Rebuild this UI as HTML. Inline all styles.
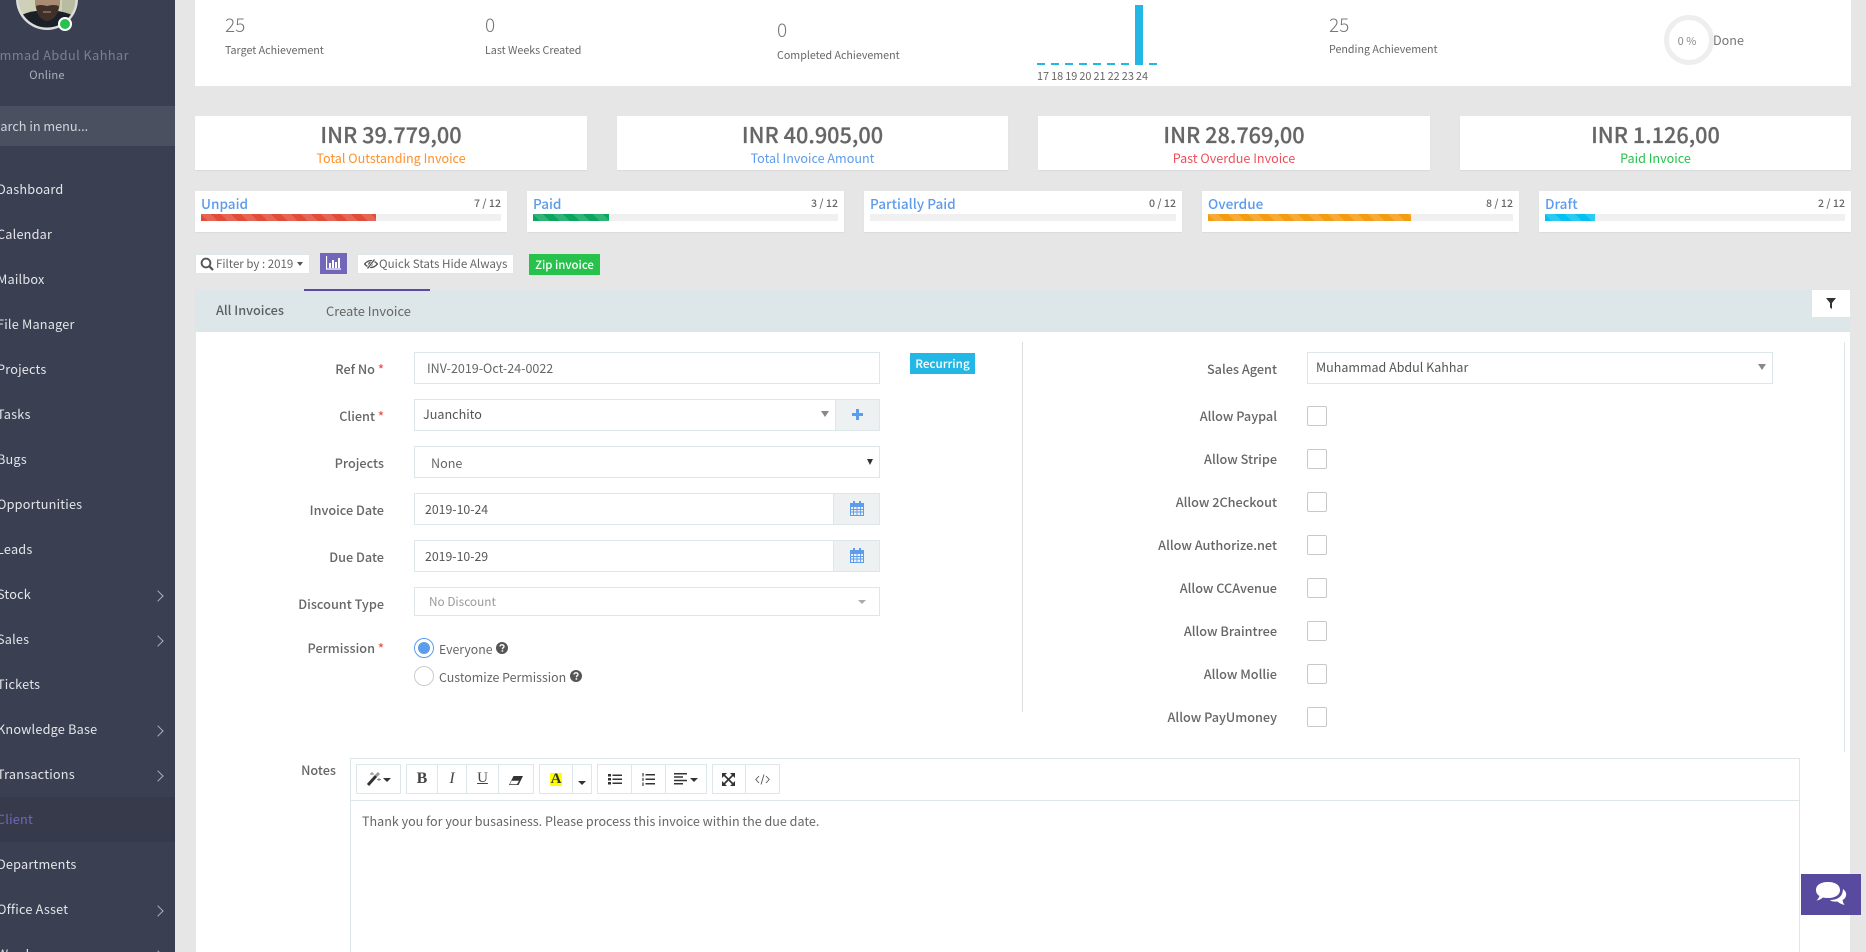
<!DOCTYPE html>
<html><head><meta charset="utf-8"><title>Invoice</title>
<style>
html,body{margin:0;padding:0;width:1866px;height:952px;overflow:hidden;background:#e6e6e6}
body{position:relative;font-family:"Noto Sans CJK JP","Liberation Sans",sans-serif;color:#666;font-size:12.6px}
div,span.a,svg.a{position:absolute}
.t{position:absolute;white-space:nowrap;line-height:20px;height:20px}
.r{text-align:right}
.c{text-align:center}
.w{background:#fff}
.card{background:#fff;box-shadow:0 1px 1px rgba(0,0,0,.05)}
.amt{font-size:21.7px;font-weight:500;color:#666;line-height:30px;height:30px;top:120px;text-align:center;white-space:nowrap;-webkit-text-stroke:.2px #666}
.lbl{font-size:12.6px;line-height:20px;height:20px;top:148px;text-align:center;white-space:nowrap}
.s18{font-size:19px;font-weight:300;color:#777}
.s12{font-size:10.7px;color:#666}
.m{left:-3px;color:#e4e6ea;font-size:12.7px;letter-spacing:.2px}
.chev{left:154px;width:7px;height:7px;border-top:1px solid #aeb2bd;border-right:1px solid #aeb2bd;transform:rotate(45deg)}
.pt{top:193px;font-size:13.6px;color:#5d9cec;font-weight:500}
.pn{top:194px;font-size:10.6px;color:#666;font-weight:500}
.tr{top:214px;height:7px;background:#f0f0f0}
.fl{top:214px;height:7px;background-image:linear-gradient(45deg,rgba(255,255,255,.15) 25%,transparent 25%,transparent 50%,rgba(255,255,255,.15) 50%,rgba(255,255,255,.15) 75%,transparent 75%,transparent);background-size:20px 20px}
.btn{background:#fff;border:1px solid #dde6e9;box-sizing:border-box;top:254px;height:20px}
.fl2{color:#666;font-size:11.5px;font-weight:400}
.ip{box-sizing:border-box;border:1px solid #dde6e9;background:#fff}
.ad{box-sizing:border-box;border:1px solid #dde6e9;background:#edf1f2}
.ck{box-sizing:border-box;border:1px solid #c8c8c8;border-radius:2px;left:1307px;width:20px;height:20px;background:#fff}
.req{color:#f05050}
.tb{box-sizing:border-box;border:1px solid #dde6e9;top:764px;height:30px;background:#fff}
.ar{width:0;height:0;border-left:4px solid transparent;border-right:4px solid transparent;border-top:6px solid #888}
.fm{font-weight:500;color:#666;font-size:12.7px}
</style></head>
<body>
<!-- sidebar -->
<div style="left:0;top:0;width:175px;height:952px;background:#3a3f51;overflow:hidden">
  <svg class="a" style="left:16px;top:-32px" width="62" height="62" viewBox="0 0 62 62">
    <defs><clipPath id="av"><circle cx="31" cy="31" r="28.500"/></clipPath></defs>
    <circle cx="31" cy="31" r="31" fill="#dcdcdc"/>
    <g clip-path="url(#av)">
      <rect width="62" height="62" fill="#cfd0b8"/>
      <rect x="46" width="16" height="62" fill="#b9bca0"/>
      <path d="M0 62V50Q10 44 20 43L42 43Q54 45 62 50V62Z" fill="#1b1f27"/>
      <path d="M19 20H44V36Q42 50 31 52Q21 50 19 36Z" fill="#a98a73"/>
      <path d="M20 38Q24 36 31 38Q38 36 43 38Q42 51 31 53Q21 51 20 38Z" fill="#3f312a"/>
      <path d="M27 43h8v2h-8z" fill="#7c6252"/>
    </g>
  </svg>
  <div style="left:58px;top:17px;width:10px;height:10px;border-radius:50%;background:#27c24c;border:2px solid #fff"></div>
  <div class="t c" style="left:-53px;top:45px;width:200px;color:#7b8190;font-size:12.7px;letter-spacing:.45px">Muhammad Abdul Kahhar</div>
  <div class="t c" style="left:17px;top:65px;width:60px;color:#aab0bc;font-size:11.200px;letter-spacing:.2px">Online</div>
  <div style="left:0;top:106px;width:175px;height:40px;background:#4b5060"></div>
  <div class="t" style="left:-14px;top:116px;color:#d2d5dc;font-size:12.7px">Search in menu...</div>
  <div style="left:0;top:797px;width:175px;height:45px;background:#363a4a"></div>
  <div class="t m" style="top:179px">Dashboard</div>
  <div class="t m" style="top:224px">Calendar</div>
  <div class="t m" style="top:269px">Mailbox</div>
  <div class="t m" style="top:314px">File Manager</div>
  <div class="t m" style="top:359px">Projects</div>
  <div class="t m" style="top:404px">Tasks</div>
  <div class="t m" style="top:449px">Bugs</div>
  <div class="t m" style="top:494px">Opportunities</div>
  <div class="t m" style="top:539px">Leads</div>
  <div class="t m" style="top:584px">Stock</div><div class="chev" style="top:592px"></div>
  <div class="t m" style="top:629px">Sales</div><div class="chev" style="top:637px"></div>
  <div class="t m" style="top:674px">Tickets</div>
  <div class="t m" style="top:719px">Knowledge Base</div><div class="chev" style="top:727px"></div>
  <div class="t m" style="top:764px">Transactions</div><div class="chev" style="top:772px"></div>
  <div class="t m" style="top:809px;color:#7266ba">Client</div>
  <div class="t m" style="top:854px">Departments</div>
  <div class="t m" style="top:899px">Office Asset</div><div class="chev" style="top:907px"></div>
  <div class="t m" style="top:944px">Word</div><div class="chev" style="top:952px"></div>
</div>

<!-- top card -->
<div class="w" style="left:195px;top:0;width:1656px;height:86px"></div>
<div class="t s18" style="left:225px;top:15px">25</div>
<div class="t s12" style="left:225px;top:41px">Target Achievement</div>
<div class="t s18" style="left:485px;top:15px">0</div>
<div class="t s12" style="left:485px;top:41px">Last Weeks Created</div>
<div class="t s18" style="left:777px;top:20px">0</div>
<div class="t s12" style="left:777px;top:46px">Completed Achievement</div>
<div style="left:1037px;top:63px;width:120px;height:2px;background:repeating-linear-gradient(90deg,#23b7e5 0,#23b7e5 8px,transparent 8px,transparent 14px)"></div>
<div style="left:1135px;top:5px;width:8px;height:60px;background:#23b7e5"></div>
<div class="t s12" style="left:1037px;top:66px;font-size:10.900px;word-spacing:-.4px">17 18 19 20 21 22 23 24</div>
<div class="t s18" style="left:1329px;top:15px">25</div>
<div class="t s12" style="left:1329px;top:40px">Pending Achievement</div>
<div style="left:1664px;top:15px;width:50px;height:50px;box-sizing:border-box;border:5px solid #eee;border-radius:50%"></div>
<div class="t c" style="left:1667px;top:31px;width:40px;font-size:11px;color:#888">0 %</div>
<div class="t" style="left:1713px;top:30px;color:#777;font-size:12.6px">Done</div>

<!-- summary cards -->
<div class="card" style="left:195px;top:116px;width:392px;height:54px"></div>
<div class="card" style="left:617px;top:116px;width:391px;height:54px"></div>
<div class="card" style="left:1038px;top:116px;width:392px;height:54px"></div>
<div class="card" style="left:1460px;top:116px;width:391px;height:54px"></div>
<div class="amt" style="left:195px;width:392px">INR 39.779,00</div>
<div class="lbl" style="left:195px;width:392px;color:#ff902b">Total Outstanding Invoice</div>
<div class="amt" style="left:617px;width:391px">INR 40.905,00</div>
<div class="lbl" style="left:617px;width:391px;color:#5d9cec">Total Invoice Amount</div>
<div class="amt" style="left:1038px;width:392px">INR 28.769,00</div>
<div class="lbl" style="left:1038px;width:392px;color:#f0505a">Past Overdue Invoice</div>
<div class="amt" style="left:1460px;width:391px">INR 1.126,00</div>
<div class="lbl" style="left:1460px;width:391px;color:#27c24c">Paid Invoice</div>

<!-- progress cards -->
<div class="card" style="left:195px;top:191px;width:312px;height:41px"></div>
<div class="card" style="left:527px;top:191px;width:317px;height:41px"></div>
<div class="card" style="left:864px;top:191px;width:318px;height:41px"></div>
<div class="card" style="left:1202px;top:191px;width:317px;height:41px"></div>
<div class="card" style="left:1539px;top:191px;width:312px;height:41px"></div>
<div class="t pt" style="left:201px">Unpaid</div><div class="t pn r" style="left:401px;width:100px">7 / 12</div>
<div class="tr" style="left:201px;width:300px"></div><div class="fl" style="left:201px;width:175px;background-color:#e24b37"></div>
<div class="t pt" style="left:533px">Paid</div><div class="t pn r" style="left:738px;width:100px">3 / 12</div>
<div class="tr" style="left:533px;width:305px"></div><div class="fl" style="left:533px;width:76px;background-color:#0aa65f"></div>
<div class="t pt" style="left:870px">Partially Paid</div><div class="t pn r" style="left:1076px;width:100px">0 / 12</div>
<div class="tr" style="left:870px;width:306px"></div>
<div class="t pt" style="left:1208px">Overdue</div><div class="t pn r" style="left:1413px;width:100px">8 / 12</div>
<div class="tr" style="left:1208px;width:305px"></div><div class="fl" style="left:1208px;width:203px;background-color:#f39c12"></div>
<div class="t pt" style="left:1545px">Draft</div><div class="t pn r" style="left:1745px;width:100px">2 / 12</div>
<div class="tr" style="left:1545px;width:300px"></div><div class="fl" style="left:1545px;width:50px;background-color:#05c1f0"></div>

<!-- toolbar -->
<div class="btn" style="left:195px;width:115px"></div>
<svg class="a" style="left:200px;top:257px" width="14" height="14" viewBox="0 0 14 14"><circle cx="6" cy="6" r="4.400" fill="none" stroke="#555" stroke-width="1.900"/><path d="M9.200 9.200L13 13" stroke="#555" stroke-width="2.200"/></svg>
<div class="t fl2" style="left:216px;top:254px">Filter by : 2019</div>
<div class="a" style="left:297px;top:262px;width:0;height:0;border-left:3.500px solid transparent;border-right:3.500px solid transparent;border-top:4px solid #555"></div>
<div style="left:320px;top:253px;width:27px;height:21px;background:#7266ba"></div>
<svg class="a" style="left:326px;top:256px" width="15" height="14" viewBox="0 0 15 14"><path d="M.5 0V13H15" fill="none" stroke="#fff" stroke-width="1.200"/><path d="M3 7h2v5H3zM6 4h2v8H6zM9 6h2v6H9zM12 2h2v10h-2z" fill="#fff"/></svg>
<div class="btn" style="left:357px;width:157px"></div>
<svg class="a" style="left:364px;top:258px" width="14" height="12" viewBox="0 0 14 12"><path d="M.5 6Q7-1 13.500 6Q7 13 .5 6Z" fill="none" stroke="#555" stroke-width="1.300"/><circle cx="6.500" cy="6" r="2.300" fill="#555"/><path d="M3.500 10.500L10.500 1.500" stroke="#fff" stroke-width="2.600"/><path d="M3.500 10.500L10.500 1.500" stroke="#555" stroke-width="1.300"/></svg>
<div class="t fl2" style="left:379px;top:254px;font-size:11.600px">Quick Stats Hide Always</div>
<div style="left:529px;top:254px;width:71px;height:21px;background:#27c24c"></div>
<div class="t" style="left:529px;top:255px;width:71px;text-align:center;color:#fff;font-size:11.400px;font-weight:500">Zip invoice</div>

<!-- tabs -->
<div style="left:195px;top:289px;width:1655px;height:43px;background:#dde6e9"></div>
<div style="left:304px;top:289px;width:126px;height:2px;background:#564aa3"></div>
<div class="t" style="left:216px;top:300px;font-weight:500;color:#5a5f63;font-size:12.700px">All Invoices</div>
<div class="t" style="left:326px;top:301px;color:#666;font-size:12.900px">Create Invoice</div>
<div class="w" style="left:1812px;top:290px;width:38px;height:27px"></div>
<svg class="a" style="left:1826px;top:298px" width="10" height="11" viewBox="0 0 10 11"><path d="M0 0H10L6 5V11L4 9.500V5Z" fill="#333"/></svg>

<!-- form panel -->
<div class="w" style="left:196px;top:332px;width:1654px;height:620px"></div>
<div style="left:1022px;top:342px;width:1px;height:370px;background:#ddd"></div>
<div style="left:1844px;top:342px;width:1px;height:410px;background:#dde6e9"></div>

<div class="t r fm" style="left:234px;top:359px;width:150px">Ref No <span class="req">*</span></div>
<div class="ip" style="left:414px;top:352px;width:466px;height:32px"></div>
<div class="t" style="left:427px;top:358px;font-size:12.500px;color:#666">INV-2019-Oct-24-0022</div>
<div style="left:910px;top:353px;width:65px;height:21px;background:#23b7e5"></div>
<div class="t c" style="left:910px;top:354px;width:65px;color:#fff;font-size:11.700px;font-weight:500">Recurring</div>

<div class="t r fm" style="left:234px;top:406px;width:150px">Client <span class="req">*</span></div>
<div class="ip" style="left:414px;top:399px;width:466px;height:32px"></div>
<div class="ad" style="left:835px;top:399px;width:45px;height:32px"></div>
<div class="t" style="left:423px;top:404px;font-size:12.600px;color:#555">Juanchito</div>
<div class="a ar" style="left:821px;top:411px"></div>
<div style="left:852px;top:413px;width:11px;height:3px;background:#5d9cec"></div>
<div style="left:856px;top:409px;width:3px;height:11px;background:#5d9cec"></div>

<div class="t r fm" style="left:234px;top:453px;width:150px">Projects</div>
<div class="ip" style="left:414px;top:446px;width:466px;height:32px"></div>
<div class="t" style="left:431px;top:453px;font-size:12.600px;color:#666">None</div>
<div class="a" style="left:867px;top:459px;width:0;height:0;border-left:3px solid transparent;border-right:3px solid transparent;border-top:6px solid #333"></div>

<div class="t r fm" style="left:234px;top:500px;width:150px">Invoice Date</div>
<div class="ip" style="left:414px;top:493px;width:466px;height:32px"></div>
<div class="ad" style="left:833px;top:493px;width:47px;height:32px"></div>
<div class="t" style="left:425px;top:499px;font-size:12.300px;color:#555">2019-10-24</div>
<svg class="a" style="left:850px;top:501px" width="14" height="15" viewBox="0 0 14 15"><path d="M.5 2.500h13v12H.5z" fill="none" stroke="#5d9cec"/><path d="M.5 2.500h13V6H.5z" fill="#5d9cec"/><path d="M3 0h2v4H3zM9 0h2v4H9z" fill="#5d9cec"/><path d="M0 8.500h14M0 11h14M3.500 6v8M7 6v8M10.500 6v8" stroke="#5d9cec" stroke-width=".9"/></svg>

<div class="t r fm" style="left:234px;top:547px;width:150px">Due Date</div>
<div class="ip" style="left:414px;top:540px;width:466px;height:32px"></div>
<div class="ad" style="left:833px;top:540px;width:47px;height:32px"></div>
<div class="t" style="left:425px;top:546px;font-size:12.300px;color:#555">2019-10-29</div>
<svg class="a" style="left:850px;top:548px" width="14" height="15" viewBox="0 0 14 15"><path d="M.5 2.500h13v12H.5z" fill="none" stroke="#5d9cec"/><path d="M.5 2.500h13V6H.5z" fill="#5d9cec"/><path d="M3 0h2v4H3zM9 0h2v4H9z" fill="#5d9cec"/><path d="M0 8.500h14M0 11h14M3.500 6v8M7 6v8M10.500 6v8" stroke="#5d9cec" stroke-width=".9"/></svg>

<div class="t r fm" style="left:234px;top:594px;width:150px">Discount Type</div>
<div class="ip" style="left:414px;top:587px;width:466px;height:29px"></div>
<div class="t" style="left:429px;top:592px;font-size:11.800px;color:#999">No Discount</div>
<div class="a" style="left:858px;top:600px;width:0;height:0;border-left:4px solid transparent;border-right:4px solid transparent;border-top:4px solid #aaa"></div>

<div class="t r fm" style="left:234px;top:638px;width:150px">Permission <span class="req">*</span></div>
<div style="left:414px;top:638px;width:20px;height:20px;box-sizing:border-box;border:1px solid #5d9cec;border-radius:50%;background:#fff"></div>
<div style="left:418px;top:642px;width:12px;height:12px;border-radius:50%;background:#5d9cec"></div>
<div class="t" style="left:439px;top:639px;font-size:12.300px;color:#666">Everyone</div>
<svg class="a" style="left:496px;top:642px" width="12" height="12" viewBox="0 0 12 12"><circle cx="6" cy="6" r="6" fill="#555"/><path d="M4 4.500Q4 2.800 6 2.800T8 4.500Q8 5.500 6.500 6.200V7.200" fill="none" stroke="#fff" stroke-width="1.300"/><path d="M5.600 8.200h1.600v1.500H5.600z" fill="#fff"/></svg>
<div style="left:414px;top:666px;width:20px;height:20px;box-sizing:border-box;border:1px solid #ccc;border-radius:50%;background:#fff"></div>
<div class="t" style="left:439px;top:667px;font-size:12.400px;color:#666">Customize Permission</div>
<svg class="a" style="left:570px;top:670px" width="12" height="12" viewBox="0 0 12 12"><circle cx="6" cy="6" r="6" fill="#555"/><path d="M4 4.500Q4 2.800 6 2.800T8 4.500Q8 5.500 6.500 6.200V7.200" fill="none" stroke="#fff" stroke-width="1.300"/><path d="M5.600 8.200h1.600v1.500H5.600z" fill="#fff"/></svg>

<!-- right column -->
<div class="t r fm" style="left:1077px;top:359px;width:200px">Sales Agent</div>
<div class="ip" style="left:1307px;top:352px;width:466px;height:32px"></div>
<div class="t" style="left:1316px;top:357px;font-size:12.500px;color:#555">Muhammad Abdul Kahhar</div>
<div class="a ar" style="left:1758px;top:364px"></div>

<div class="t r fm" style="left:1077px;top:406px;width:200px">Allow Paypal</div><div class="ck" style="top:406px"></div>
<div class="t r fm" style="left:1077px;top:449px;width:200px">Allow Stripe</div><div class="ck" style="top:449px"></div>
<div class="t r fm" style="left:1077px;top:492px;width:200px">Allow 2Checkout</div><div class="ck" style="top:492px"></div>
<div class="t r fm" style="left:1077px;top:535px;width:200px">Allow Authorize.net</div><div class="ck" style="top:535px"></div>
<div class="t r fm" style="left:1077px;top:578px;width:200px">Allow CCAvenue</div><div class="ck" style="top:578px"></div>
<div class="t r fm" style="left:1077px;top:621px;width:200px">Allow Braintree</div><div class="ck" style="top:621px"></div>
<div class="t r fm" style="left:1077px;top:664px;width:200px">Allow Mollie</div><div class="ck" style="top:664px"></div>
<div class="t r fm" style="left:1077px;top:707px;width:200px">Allow PayUmoney</div><div class="ck" style="top:707px"></div>

<!-- notes editor -->
<div class="t r fm" style="left:236px;top:760px;width:100px">Notes</div>
<div style="left:350px;top:758px;width:1450px;height:194px;box-sizing:border-box;border:1px solid #dde6e9;border-bottom:0;background:#fff"></div>
<div style="left:351px;top:800px;width:1448px;height:1px;background:#dde6e9"></div>
<div class="tb" style="left:356px;width:45px"></div>
<div class="tb" style="left:406px;width:32px"></div>
<div class="tb" style="left:437px;width:30px"></div>
<div class="tb" style="left:466px;width:33px"></div>
<div class="tb" style="left:498px;width:36px"></div>
<div class="tb" style="left:539px;width:34px"></div>
<div class="tb" style="left:572px;width:20px"></div>
<div class="tb" style="left:597px;width:35px"></div>
<div class="tb" style="left:631px;width:35px"></div>
<div class="tb" style="left:665px;width:42px"></div>
<div class="tb" style="left:712px;width:34px"></div>
<div class="tb" style="left:745px;width:35px"></div>
<svg class="a" style="left:367px;top:771px" width="14" height="15" viewBox="0 0 14 15"><path d="M1 14L9 5" stroke="#333" stroke-width="3"/><path d="M9 5l3-3" stroke="#999" stroke-width="3"/><path d="M5 1v3M3 3h4M12 7v3M10 8.500h4" stroke="#888" stroke-width="1"/></svg>
<div class="a" style="left:383px;top:778px;width:0;height:0;border-left:4px solid transparent;border-right:4px solid transparent;border-top:4px solid #333"></div>
<div class="t c" style="left:406px;top:769px;width:32px;font-family:'Liberation Serif',serif;font-weight:700;font-size:16px;color:#444">B</div>
<div class="t c" style="left:437px;top:769px;width:30px;font-family:'Liberation Serif',serif;font-style:italic;font-size:16px;color:#444">I</div>
<div class="t c" style="left:466px;top:768px;width:33px;font-family:'Liberation Serif',serif;font-size:15px;color:#444;text-decoration:underline">U</div>
<svg class="a" style="left:509px;top:776px" width="14" height="9" viewBox="0 0 14 9"><path d="M4.500 0H14L9.500 9H0Z" fill="#333"/><path d="M2.500 4.800H10L8 8.300H1Z" fill="#fff"/></svg>
<div style="left:550px;top:773px;width:12px;height:13px;background:#ff0"></div>
<div class="t c" style="left:539px;top:769px;width:34px;font-family:'Liberation Serif',serif;font-weight:700;font-size:15px;color:#333">A</div>
<div class="a" style="left:578px;top:781px;width:0;height:0;border-left:4px solid transparent;border-right:4px solid transparent;border-top:4px solid #333"></div>
<svg class="a" style="left:608px;top:774px" width="14" height="11" viewBox="0 0 14 11"><path d="M0 0h3v2.500H0zM0 4h3v2.500H0zM0 8h3v2.500H0zM4.500.5H14v1.500H4.500zM4.500 4.500H14V6H4.500zM4.500 8.500H14V10H4.500z" fill="#333"/></svg>
<svg class="a" style="left:642px;top:773px" width="13" height="13" viewBox="0 0 13 13"><path d="M3.500 1H13v1.500H3.500zM3.500 5.500H13V7H3.500zM3.500 10H13v1.500H3.500z" fill="#333"/><path d="M0 0h2v3.500H0zM0 5h2v3H0zM0 9.500h2V13H0z" fill="#888"/></svg>
<svg class="a" style="left:674px;top:773px" width="13" height="12" viewBox="0 0 13 12"><path d="M0 0h13v1.500H0zM0 3.300h9v1.500H0zM0 6.700h13v1.500H0zM0 10h9v1.500H0z" fill="#333"/></svg>
<div class="a" style="left:690px;top:778px;width:0;height:0;border-left:4px solid transparent;border-right:4px solid transparent;border-top:4px solid #333"></div>
<svg class="a" style="left:722px;top:773px" width="13" height="13" viewBox="0 0 13 13"><path d="M0 0h5L0 5zM13 0v5L8 0zM0 13V8l5 5zM13 13H8l5-5z" fill="#333"/><path d="M2 2l9 9M11 2L2 11" stroke="#333" stroke-width="1.700"/></svg>
<svg class="a" style="left:755px;top:774px" width="15" height="11" viewBox="0 0 15 11"><path d="M4 2L.8 5.500L4 9M11 2l3.200 3.500L11 9M9 .5L6 10.500" fill="none" stroke="#555" stroke-width=".9"/></svg>
<div class="t" style="left:362px;top:811px;font-size:12.550px;color:#666">Thank you for your busasiness. Please process this invoice within the due date.</div>

<!-- chat -->
<div style="left:1801px;top:874px;width:60px;height:41px;background:#584a9f"></div>
<svg class="a" style="left:1815px;top:882px" width="32" height="24" viewBox="0 0 32 24"><path d="M28 7Q32 10 31 14Q30 17 27.500 18Q28 21 29.500 23Q25 22 22.500 19.500Q17 20 15 18Q24 18 27 12Q28 9 28 7Z" fill="#fff"/><path d="M13 0C20 0 25 3 25 8C25 13 20 16 13 16Q10 16 8 15.500Q5 18 1.500 18.500Q4 16 4.500 14Q1 12 1 8C1 3 6 0 13 0Z" fill="#fff"/></svg>
</body></html>
